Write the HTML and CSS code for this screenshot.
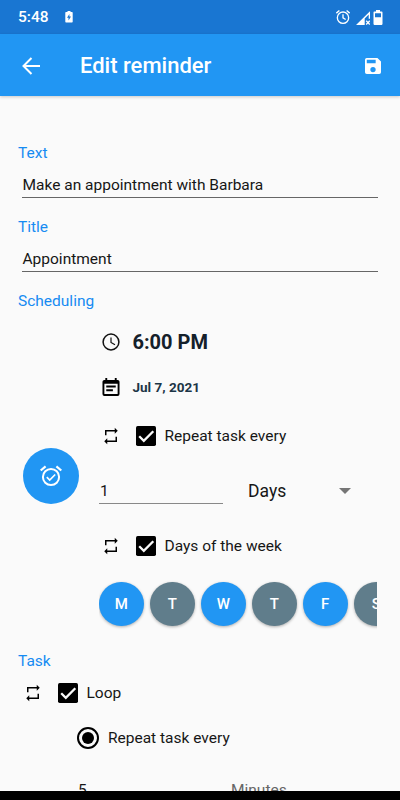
FILE: index.html
```html
<!DOCTYPE html>
<html lang="en">
<head>
<meta charset="utf-8">
<title>Edit reminder</title>
<link rel="stylesheet" href="styles.css">
</head>
<body>
<svg class="defs" aria-hidden="true">
  <symbol id="repeat" viewBox="0 0 24 24"><path d="M6 11V6h11v3l4-4-4-4v3H4v7zM18 13v5H7v-3l-4 4 4 4v-3h13v-7z"/></symbol>
  <symbol id="check" viewBox="0 0 20 20"><rect width="20" height="20" rx="1.7" fill="#000"/><path d="M3.2 10.300l4.600 4.500L17.300 5.200" fill="none" stroke="#fafafa" stroke-width="2.300"/></symbol>
</svg>
<div class="screen">
  <header class="status">
    <span class="clock">5:48</span>
    <svg class="saver" viewBox="0 0 8 12"><path fill="#fff" fill-rule="evenodd" d="M2.5 0h3v1H7q.7 0 .7.7v9.1q0 .7-.7.7H1q-.7 0-.7-.7V1.700Q.3 1 1 1h1.500zM4.400 3L2 6.800h1.500V9.500L6 5.600H4.400z"/></svg>
    <svg class="alarm" viewBox="0 0 24 24" fill="none" stroke="#fff" stroke-width="2"><circle cx="12" cy="13" r="8.500"/><path d="M12 8v5.300l4 2.500M2 6.200l4.600-3.900M22 6.200l-4.600-3.900"/></svg>
    <svg class="signal" viewBox="0 0 14 14"><path fill="#fff" fill-rule="evenodd" d="M0 14L14 .3V7.800h-1.300V3.500L8.700 7.500V14z"/><path stroke="#fff" stroke-width="1.300" d="M10.200 9.800l3.600 3.700m0-3.700l-3.600 3.700"/></svg>
    <svg class="battery" viewBox="0 0 10 15"><path fill="#fff" fill-rule="evenodd" d="M3 0h4v1.600h1.700q.8 0 .8.800v11.700q0 .8-.8.800H1.300q-.8 0-.8-.8V2.400q0-.8.8-.8H3zM2 3.200v4h6v-4z"/></svg>
  </header>
  <nav class="appbar">
    <svg class="back" viewBox="0 0 18 18" fill="none" stroke="#fff" stroke-width="2"><path d="M18 9H1.500M9.500 1L1.500 9l8 8"/></svg>
    <h1>Edit reminder</h1>
    <svg class="save" viewBox="3 3 18 18"><path fill="#fff" d="M17 3H5a2 2 0 0 0-2 2v14a2 2 0 0 0 2 2h14a2 2 0 0 0 2-2V7zm-5 16a3 3 0 1 1 0-6 3 3 0 0 1 0 6zm3-10H5V5h10z"/></svg>
  </nav>
  <main>
    <div class="label">Text</div>
    <div class="field"><span>Make an appointment with Barbara</span></div>
    <div class="label">Title</div>
    <div class="field"><span>Appointment</span></div>
    <div class="label">Scheduling</div>
    <section class="schedule">
      <div class="fab"><svg viewBox="0 0 24 24" fill="none" stroke="#fff" stroke-width="2"><circle cx="12" cy="13" r="8.100"/><path d="M7.800 13.200l2.900 2.800 5.500-5.500" stroke-width="1.700"/><path d="M1.700 6.500l4.900-4.100M22.300 6.500l-4.900-4.100" stroke-width="2.200"/></svg></div>
      <div class="options">
        <div class="row time"><svg class="i18" viewBox="0 0 18 18" fill="none" stroke="#111"><circle cx="9" cy="9" r="7.900" stroke-width="1.500"/><path d="M9 4.500v5l4 2.300" stroke-width="1.200"/></svg><b>6:00 PM</b></div>
        <div class="row date"><svg class="i18" viewBox="3 2 18 19"><path fill="#000" d="M17 10H7v2h10zM19 4h-1V2h-2v2H8V2H6v2H5a2 2 0 0 0-2 2v13a2 2 0 0 0 2 2h14a2 2 0 0 0 2-2V6a2 2 0 0 0-2-2zm0 15H5V8h14zm-5-5H7v2h7z"/></svg><b>Jul 7, 2021</b></div>
        <div class="row toggle"><svg class="rep"><use href="#repeat"/></svg><svg class="chk"><use href="#check"/></svg><span>Repeat task every</span></div>
        <div class="row interval"><span class="count">1</span><span class="unit">Days</span><i class="caret"></i></div>
        <div class="row toggle"><svg class="rep"><use href="#repeat"/></svg><svg class="chk"><use href="#check"/></svg><span>Days of the week</span></div>
        <div class="days"><b class="on">M</b><b>T</b><b class="on">W</b><b>T</b><b class="on">F</b><b>S</b></div>
      </div>
    </section>
    <div class="label task">Task</div>
    <div class="row toggle loop"><svg class="rep"><use href="#repeat"/></svg><svg class="chk"><use href="#check"/></svg><span>Loop</span></div>
    <div class="row radio"><i class="dot"></i><span>Repeat task every</span></div>
    <div class="row last"><span class="five">5</span><span class="min">Minutes</span></div>
  </main>
  <footer></footer>
</div>
</body>
</html>
```

FILE: styles.css
```css
* { box-sizing: border-box; }
body { margin: 0; font-family: Roboto, "Liberation Sans", sans-serif; font-size: 15.5px; color: #161616; background: #fafafa; }
svg { display: block; flex: none; }
.defs { width: 0; height: 0; position: absolute; }
.screen { width: 400px; height: 800px; display: flex; flex-direction: column; overflow: hidden; }
.status { height: 34px; flex: none; background: #1976d2; color: #fff; display: flex; align-items: center; padding: 0 17px 0 18px; }
.clock { font-size: 15.5px; font-weight: 500; width: 46.500px; }
.saver { width: 8px; height: 12px; margin-right: auto; }
.alarm { width: 16px; height: 16px; margin-right: 5px; }
.signal { width: 14px; height: 14px; margin-right: 3px; margin-top: 1px; }
.battery { width: 10px; height: 15px; }
.appbar { height: 62px; flex: none; background: #2196f3; color: #fff; display: flex; align-items: center; padding: 2px 19px 0 22px; box-shadow: 0 1px 3px rgba(0,0,0,.2); z-index: 1; }
.back { width: 18px; height: 18px; }
h1 { margin: 0 auto 0 40px; font-size: 22px; font-weight: 500; line-height: 30px; }
.save { width: 16px; height: 16px; }
main { flex: 1; min-height: 0; overflow: hidden; padding: 46px 22.500px 0 18px; }
.label { height: 22px; line-height: 22px; color: #168bf2; }
.field { height: 34px; margin: 0 0 18px 4px; padding: 9px 0 0 .5px; border-bottom: 1px solid #666; line-height: 24px; }
.schedule { display: flex; margin-top: 8px; height: 315px; align-items: flex-start; }
.fab { width: 56px; height: 56px; margin: 128px 20px 0 5px; border-radius: 50%; background: #2196f3; display: flex; align-items: center; justify-content: center; flex: none; }
.fab svg { width: 24px; height: 24px; }
.options { flex: 1; min-width: 0; }
.row { display: flex; align-items: center; }
.i18 { width: 18px; height: 18px; margin: 0 12.500px 0 3px; }
.time { height: 44px; font-size: 20px; color: #14202a; }
.time b { font-weight: 700; }
.date { height: 45px; font-size: 13.500px; color: #1c3546; }
.toggle { height: 54px; }
.rep { width: 18px; height: 18px; margin: 0 15.500px 0 3px; }
.chk { width: 20px; height: 20px; margin-right: 9px; }
.interval { height: 56px; }
.count { width: 124px; height: 25px; border-bottom: 1px solid #888; line-height: 24px; padding-left: 1px; margin-right: 25px; }
.unit { width: 91px; font-size: 17.500px; }
.caret { border: 6px solid transparent; border-top: 6px solid #757575; border-bottom: 0; }
.days { height: 62px; display: flex; align-items: center; gap: 6.500px; overflow: hidden; width: 277.500px; }
.days b { width: 44.500px; height: 44.500px; flex: none; border-radius: 50%; background: #607d8b; color: #fff; display: flex; align-items: center; justify-content: center; font-size: 15px; font-weight: 500; box-shadow: 0 1px 3px rgba(0,0,0,.3); }
.days b.on { background: #2196f3; }
.task { margin-top: 15px; }
.loop { height: 41px; padding-left: 3px; }
.radio { height: 50px; padding-left: 59px; }
.dot { width: 22px; height: 22px; border: 2px solid #000; border-radius: 50%; margin-right: 9px; display: flex; align-items: center; justify-content: center; }
.dot::before { content: ""; width: 12px; height: 12px; border-radius: 50%; background: #000; }
.last { height: 53px; padding-left: 60px; }
.five { width: 153px; }
.min { color: #666; }
footer { height: 9px; flex: none; background: #000; }
```
